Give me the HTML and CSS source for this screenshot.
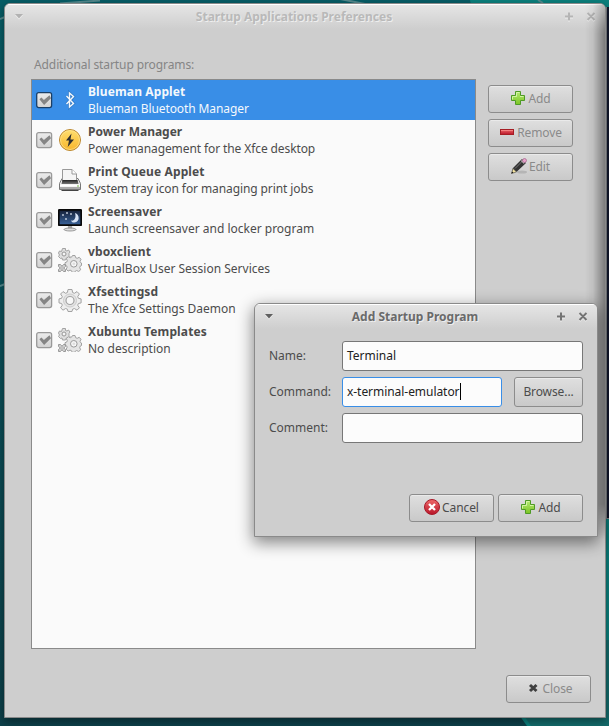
FILE: index.html
```html
<!DOCTYPE html>
<html lang="en">
<head>
<meta charset="utf-8">
<title>Startup Applications Preferences</title>
<link rel="stylesheet" href="styles.css">
</head>
<body>
<svg width="0" height="0" class="defs" aria-hidden="true">
  <defs>
    <linearGradient id="green" x2="0" y2="1"><stop offset="0" stop-color="#b4ea72"/><stop offset="1" stop-color="#7cc424"/></linearGradient>
    <linearGradient id="red" x2="0" y2="1"><stop offset="0" stop-color="#ee6a6a"/><stop offset="1" stop-color="#b81428"/></linearGradient>
    <linearGradient id="gold" x2="0" y2="1"><stop offset="0" stop-color="#ffdf70"/><stop offset="1" stop-color="#f8b62c"/></linearGradient>
    <linearGradient id="night" x2="0" y2="1"><stop offset="0" stop-color="#151f36"/><stop offset="1" stop-color="#3a649c"/></linearGradient>
    <linearGradient id="box" x2="0" y2="1"><stop offset="0" stop-color="#ececec"/><stop offset="1" stop-color="#d2d2d2"/></linearGradient>
    <linearGradient id="tray" x2="0" y2="1"><stop offset="0" stop-color="#222"/><stop offset="1" stop-color="#777"/></linearGradient>
    <symbol id="plus" viewBox="0 0 16 16"><path d="M5.500 1.500h5v4h4v5h-4v4h-5v-4h-4v-5h4z" fill="url(#green)" stroke="#4e9a26"/><path d="M6.500 6.500v-4h3M2.500 9.500v-3h4M10 6.500h3.500" fill="none" stroke="#d4f5a4"/></symbol>
    <symbol id="gear" viewBox="0 0 24 24">
      <path d="M10 1.500h4l.6 3 1.800.800 2.600-1.700 2.400 2.400-1.700 2.600.7 1.700 2.700.6v4l-2.700.6-.7 1.700 1.700 2.600-2.400 2.400-2.600-1.700-1.800.7-.6 2.300h-4l-.6-2.300-1.800-.7-2.600 1.700-2.400-2.400 1.700-2.600-.7-1.700-2.600-.6v-4l2.600-.6.7-1.700-1.700-2.600L5 3.600l2.600 1.700 1.800-.8z" fill="#ededed" stroke="#a2a2a2"/>
      <circle cx="12" cy="12.500" r="6.500" fill="#e4e4e4" stroke="#ccc"/><circle cx="12" cy="12.500" r="4" fill="#f8f8f8" stroke="#a2a2a2" stroke-width="1.200"/>
    </symbol>
    <symbol id="gears" viewBox="0 0 24 24">
      <path d="M4.500.5h3v2l1.500.5 1.500-1 1.500 2-1 1.500v2l1 1-2 2-1.500-.5-1 2h-3l-.5-2-1.500.5-2-2 1-1.500-1-2 1-2 2 .5z" fill="#dedede" stroke="#a2a2a2"/><circle cx="6" cy="6" r="2" fill="#f5f5f5" stroke="#969696"/>
      <path d="M14.500 7.500h2.500l.7 2.200 1.500.6 2-1 1.800 2-1 2 .5 1.200 1 .5v2.500l-1.300.7-.5 1.500 1 2-2 1.800-2-1-1.300.6-.7 1.200h-2.500l-.7-1.600-1.500-.6-2 1-1.800-2 1-2-.6-1.300-1.600-.6v-2.500l1.800-.7.5-1.500-1-2 2-1.800 2 1 1.300-.6z" fill="#e4e4e4" stroke="#a0a0a0"/><circle cx="15.800" cy="15.800" r="3.300" fill="#f5f5f5" stroke="#999"/><circle cx="15.800" cy="15.800" r="1.300" fill="#ddd"/>
      <path d="M.5 16.500h2l1 1h1l1-1h2v2l-1 1v1l1 1v2h-2l-1-1h-1l-1 1h-2v-2l1-1v-1l-1-1z" fill="#ccc" stroke="#999"/><path d="M3 19h2v2H3z" fill="#eee" stroke="#999" stroke-width=".6"/>
    </symbol>
    <symbol id="check" viewBox="0 0 17 17"><rect x=".7" y=".7" width="14.900" height="14.900" rx="2" fill="url(#box)" stroke="currentColor" stroke-width="1.300"/><path d="M3.400 7.200l2-1.800 2.500 2.500 5.600-4.700 1.500 3-6.900 6.900z" fill="#858585"/></symbol>
  </defs>
</svg>
<div class="desktop">
  <svg class="wallpaper" width="609" height="726" viewBox="0 0 609 726">
    <path d="M470 0h139v726h-82l-10-14V200z" fill="#0b807d"/>
    <path d="M470 640h139v86h-78l-20-30z" fill="#136a6a"/>
    <path d="M0 19l5-2M60 3.500L100 .5M340-1l30 6M538 0l5 3M0 286l5-2" stroke="#55898d" stroke-width="2"/>
  </svg>
  <div class="side-window"></div>
  <main class="window">
    <header class="titlebar">
      <svg class="menu" width="10" height="7"><path d="M1 2h8L5 6.500z" fill="#f0f0f0"/><path d="M1 1h8L5 5.500z" fill="#b2b2b2"/></svg>
      <h1>Startup Applications Preferences</h1>
      <svg class="controls" width="32" height="12"><g fill="none" stroke-width="2"><path d="M1 6.500h8M5 2.500v8M23.500 3l7 7M30.500 3l-7 7" stroke="#eee"/><path d="M1 5.500h8M5 1.500v8M23.500 2l7 7M30.500 2l-7 7" stroke="#b5b5b5"/></g></svg>
    </header>
    <p class="caption">Additional startup programs:</p>
    <div class="content">
      <ul class="list">
        <li class="selected"><svg class="check"><use href="#check"/></svg><svg class="icon" viewBox="0 0 24 24"><path d="M8.500 8l7 7.500-4 3.500V5l4 3.500-7 7.500" fill="none" stroke="#205893" stroke-width="3" opacity=".35"/><path d="M8.500 8l7 7.500-4 3.500V5l4 3.500-7 7.500" fill="none" stroke="#f4f8fc" stroke-width="1.400"/></svg><div><b>Blueman Applet</b><span class="tight">Blueman Bluetooth Manager</span></div></li>
        <li><svg class="check"><use href="#check"/></svg><svg class="icon" viewBox="0 0 24 24"><circle cx="12" cy="12" r="10.500" fill="url(#gold)" stroke="#ba8730"/><circle cx="12" cy="12" r="9.500" fill="none" stroke="#ffe696" stroke-width=".7"/><path d="M13.500 5.500L8 12.500h3L9.700 19 16 11.500h-3.500z" fill="#303030"/></svg><div><b class="natural">Power Manager</b><span class="tight">Power management for the Xfce desktop</span></div></li>
        <li><svg class="check"><use href="#check"/></svg><svg class="icon" viewBox="0 0 24 24"><path d="M4 10.500h16l2.500 5v6h-21v-6z" fill="#e8e8e8" stroke="#777"/><path d="M4.500 14V1.500h9.500l4.500 4.500v8z" fill="#f5f5f5" stroke="#999"/><path d="M14 1.500V6h4.500" fill="#fff" stroke="#999"/><path d="M4.500 12h15l1 4h-17z" fill="url(#tray)"/><path d="M2 16.500h20v2H2z" fill="#fff"/><path d="M2 19h20v2H2z" fill="#aaa"/><path d="M3.500 22.500h17" stroke="#444"/><path d="M19 18h2" stroke="#79b94c"/></svg><div><b>Print Queue Applet</b><span class="tight">System tray icon for managing print jobs</span></div></li>
        <li><svg class="check"><use href="#check"/></svg><svg class="icon" viewBox="0 0 24 24"><path d="M10 18h4l.5 4h-5z" fill="#aaa"/><ellipse cx="12" cy="21.500" rx="6" ry="1.500" fill="#ddd" stroke="#777" stroke-width=".7"/><rect x=".8" y="1.800" width="22.400" height="15.400" rx=".5" fill="url(#night)" stroke="#090909" stroke-width="1.700"/><path d="M17 5c5 1.500 5 9-.5 9.500-2 .2-3-.7-3.500-2 3.500 1 5.500-3 4-7.500" fill="#d6e2f5"/><path d="M4 7h2M5 6v2M8 5h2M9 4v2M12 6h2M13 5v2M7 11h2M8 10v2" stroke="#d6dde9" stroke-width=".8"/></svg><div><b>Screensaver</b><span>Launch screensaver and locker program</span></div></li>
        <li><svg class="check"><use href="#check"/></svg><svg class="icon"><use href="#gears"/></svg><div><b>vboxclient</b><span>VirtualBox User Session Services</span></div></li>
        <li><svg class="check"><use href="#check"/></svg><svg class="icon"><use href="#gear"/></svg><div><b>Xfsettingsd</b><span>The Xfce Settings Daemon</span></div></li>
        <li><svg class="check"><use href="#check"/></svg><svg class="icon"><use href="#gears"/></svg><div><b>Xubuntu Templates</b><span>No description</span></div></li>
      </ul>
      <div class="actions">
        <button><svg width="16" height="16"><use href="#plus"/></svg>Add</button>
        <button><svg width="16" height="16"><rect x="1.500" y="5.500" width="13" height="5" fill="url(#red)" stroke="#a51e24"/><path d="M2 6.500h12" stroke="#f48181"/></svg>Remove</button>
        <button><svg width="16" height="16"><ellipse cx="11" cy="14" rx="5" ry="1.500" fill="#aaa" opacity=".7"/><path d="M.5 15.500l1.500-5.500L11 1l4 4-9 8.500z" fill="#333"/><path d="M4 10.500l7.500-7.500" stroke="#777"/><path d="M.5 15.500l1.500-5 3.500 3.500z" fill="#f5e4a0" stroke="#555" stroke-width=".6"/><path d="M.5 15.500l.5-2 1.500 1.200z" fill="#111"/><path d="M10.500 2.500l2.800 2.800" stroke="#ccc" stroke-width="1.500"/><circle cx="13.500" cy="2.500" r="2" fill="#e7a2cb" stroke="#a5668b" stroke-width=".7"/></svg>Edit</button>
      </div>
    </div>
    <footer class="footer"><button><svg width="16" height="16"><path d="M5 5l6.500 6M11.500 5L5 11" stroke="#404040" stroke-width="3"/></svg>Close</button></footer>
  </main>
  <section class="dialog">
    <header class="titlebar">
      <svg class="menu" width="10" height="7"><path d="M1 2h8L5 6.500z" fill="#f0f0f0"/><path d="M1 1h8L5 5.500z" fill="#606060"/></svg>
      <h2>Add Startup Program</h2>
      <svg class="controls" width="32" height="12"><g fill="none" stroke-width="2"><path d="M1 6.500h8M5 2.500v8M23.500 3l7 7M30.500 3l-7 7" stroke="#eee"/><path d="M1 5.500h8M5 1.500v8M23.500 2l7 7M30.500 2l-7 7" stroke="#747474"/></g></svg>
    </header>
    <div class="form">
      <label>Name:</label><div class="field wide">Terminal</div>
      <label>Command:</label><div class="field focused">x-terminal-emulator<i class="caret"></i></div><button>Browse...</button>
      <label>Comment:</label><div class="field wide"></div>
    </div>
    <footer class="dialog-actions">
      <button><svg width="16" height="16"><circle cx="8" cy="8" r="7.500" fill="url(#red)" stroke="#a61a2a"/><path d="M5 5l6 6M11 5l-6 6" stroke="#fff" stroke-width="2.300"/></svg>Cancel</button>
      <button><svg width="16" height="16"><use href="#plus"/></svg>Add</button>
    </footer>
  </section>
</div>
</body>
</html>
```
FILE: styles.css
```css
* { box-sizing: border-box; }
body { margin: 0; overflow: hidden; font: 12px/17px "Noto Sans", sans-serif; color: #4c4c4c; }
h1, h2, p, ul { margin: 0; padding: 0; }
.defs { position: absolute; }
.desktop { position: relative; width: 609px; height: 726px; overflow: hidden; background: linear-gradient(#075d66, #0d4049); }
.wallpaper { position: absolute; inset: 0; }
.side-window { position: absolute; left: 606px; top: 7px; width: 3px; height: 512px; background: #11172b; border: solid #7d8085; border-width: 0 0 1px 1px; }
.window, .dialog { position: absolute; background: #cecece; border: 1px solid #8a8a8a; display: flex; flex-direction: column; overflow: hidden; }
.window { left: 4px; top: 3px; width: 602px; height: 715px; border-radius: 6px 6px 0 0; box-shadow: 0 3px 8px #0006; }
.window::after { content: ""; position: absolute; right: 0; top: 0; width: 20px; height: 535px; background: linear-gradient(90deg, #0000, #0001 40%, #0006); -webkit-mask-image: linear-gradient(#0008, #000 30px, #000 500px, #0000); mask-image: linear-gradient(#0008, #000 30px, #000 500px, #0000); }
.dialog { left: 254px; top: 303px; width: 344px; height: 234px; border-radius: 6px 6px 0 0; box-shadow: 0 5px 16px 1px #0007; }
.titlebar { height: 25px; flex: none; display: flex; align-items: center; padding: 0 9px 1px; background: linear-gradient(#e5e5e5, #cecece); border-top: 1px solid #fff; }
.titlebar h1, .titlebar h2 { flex: 1; text-align: center; font-size: 12px; line-height: 17px; color: #6a6a6a; text-shadow: 1px 1px #eee; padding-bottom: 1px; }
.titlebar h1 { color: #b9b9b9; }
.caption { margin: 27px 0 6px 29px; height: 17px; color: #858585; letter-spacing: -.1px; }
.content { display: flex; gap: 12px; padding-left: 26px; }
.list { width: 445px; height: 570px; background: #fafafa; border: 1px solid #8a8a8a; list-style: none; }
.list li { height: 40px; display: flex; align-items: center; padding-left: 4px; }
.list .check { width: 17px; height: 17px; color: #999; margin-right: 5px; flex: none; }
.list .icon { width: 24px; height: 24px; margin-right: 6px; flex: none; }
.list b, .list span { display: block; white-space: nowrap; }
.list b { letter-spacing: .12px; }
.list .natural { letter-spacing: 0; }
.list .tight { letter-spacing: -.1px; }
.list li.selected { background: #398ee7; color: #f4f8fc; }
.list .selected .check { color: #1a3f67; }
.actions { display: flex; flex-direction: column; gap: 6px; padding-top: 6px; }
button { width: 85px; height: 28px; padding: 0 0 2px; display: flex; align-items: center; justify-content: center; gap: 2px; font: inherit; letter-spacing: -.1px; color: #8a8a8a; border: 1px solid #8c8c8c; border-radius: 3px; background: linear-gradient(#dfdfdf, #c9c9c9); box-shadow: inset 0 1px #eaeaea; }
.footer { display: flex; justify-content: flex-end; padding: 26px 14px 0; }
.form { display: grid; grid-template-columns: 73px 160px 81px; row-gap: 6px; padding: 12px 14px 0; align-items: center; }
.form label { padding-bottom: 2px; }
.form button { width: 69px; height: 30px; justify-self: end; }
.field { height: 30px; display: flex; align-items: center; padding: 0 0 2px 4px; background: #fcfcfc; border: 1px solid #777; border-radius: 3px; color: #222; }
.wide { grid-column: 2 / 4; }
.focused { border-color: #398ee7; letter-spacing: -.05px; }
.caret { width: 1px; height: 17px; background: #000; }
.dialog button { color: #4c4c4c; }
.dialog-actions { display: flex; justify-content: flex-end; gap: 4px; padding: 51px 14px 0; }
```
